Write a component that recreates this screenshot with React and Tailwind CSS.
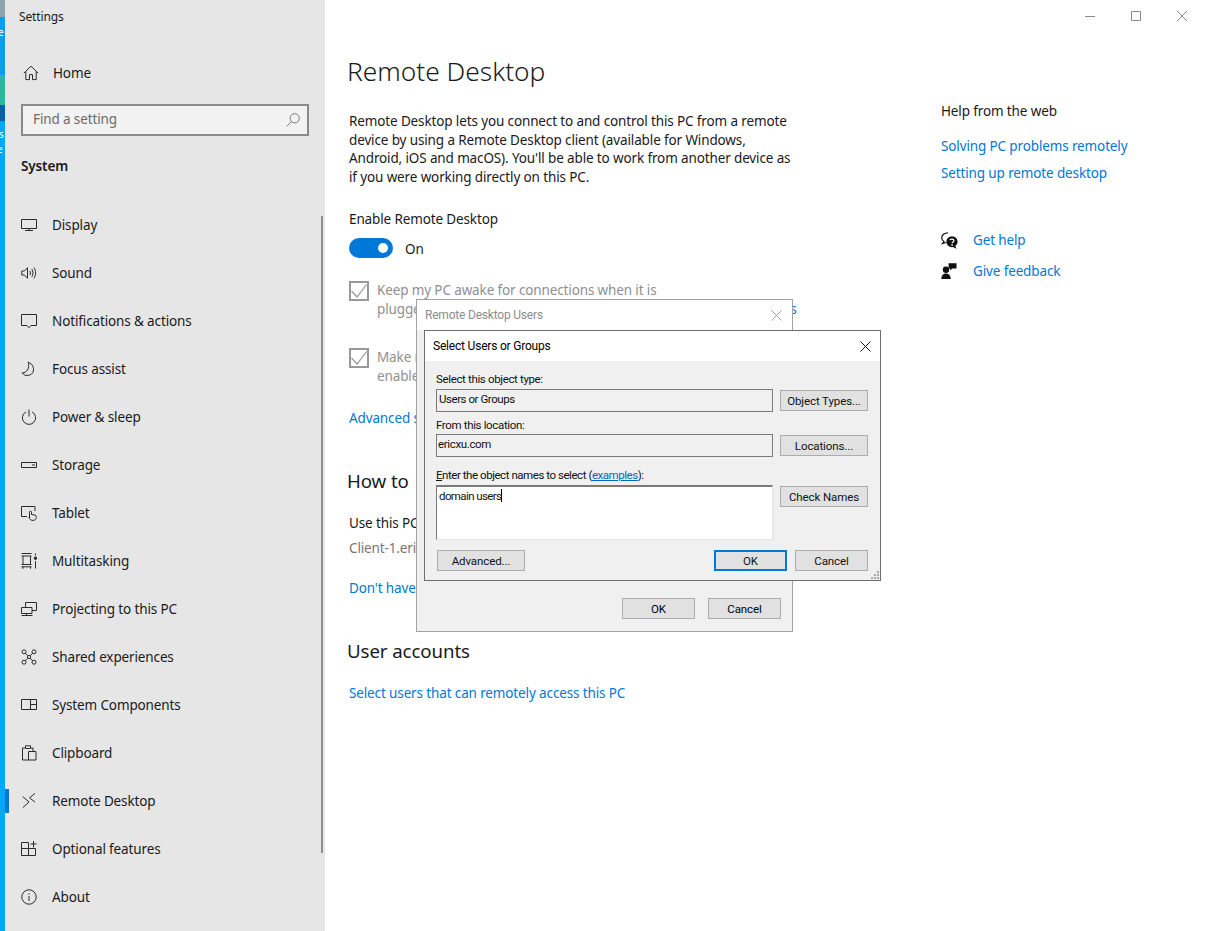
import React from "react";

const S = ({ children, w = 16, h = 16, vb = "0 0 16 16", className = "" }) => (
  <svg width={w} height={h} viewBox={vb} fill="none" stroke="#2b2b2b" strokeWidth="1" className={className}>
    {children}
  </svg>
);

const icons = {
  home: <S><path d="M.8 8.2 8 1.2l7.2 7M2.8 6.6v8h3.7v-5h3v5h3.7v-8" /></S>,
  display: <S><path d="M.5 2.5h15v9H.5zM4 13.5h8M8 11.5v2" /></S>,
  sound: <S><path d="M.8 6h2.4L6.5 2.8v10.4L3.2 10H.8zM8.8 6c.9 1.2.9 2.8 0 4M10.8 4.2c1.6 2.2 1.6 5.4 0 7.6M12.8 2.5c2.4 3.2 2.4 7.8 0 11" /></S>,
  notif: <S><path d="M.5 1.5h15v11H10l-2 2.2-2-2.2H.5z" /></S>,
  focus: <S><path d="M7.2 1.2c2.4 1 5.3 3 5.3 6.6a6.3 6.3 0 0 1-11.5 4c4.5.6 8-4.6 6.2-10.6z" /></S>,
  power: <S><path d="M5 2.9a6.6 6.6 0 1 0 6 0M8 .5v7" /></S>,
  storage: <S><path d="M.5 5.5h15v5H.5zM11 8h3" /></S>,
  tablet: <S><path d="M6 11.5H.5v-10h13.5V6M8.5 13V7.2a1 1 0 0 1 2 0V9.5l3.5.6c.9.2 1.3.7 1.3 1.4v1c0 1.5-1.4 2.9-3.3 2.9-1.8 0-2.7-.6-3.5-1.9l-.7-1.3" /></S>,
  multi: <S><path d="M.5 .5h10M.5 3h10M2 3v8.5M9.5 3v8.5M.5 11.5h10M.5 13.8h10M2 13.8v2M9.5 13.8v2M14.5 .5v2M14.5 8v7.5" /><circle cx="14.5" cy="5.2" r="1.3" fill="#2b2b2b" /></S>,
  project: <S><path d="M4.5 6V1.5h11v8h-4.5M.5 6.5h10.5v6H.5zM.5 14.5h11M5.5 12.5v2" /></S>,
  shared: <S><circle cx="3" cy="2.8" r="2" /><circle cx="13" cy="2.8" r="2" /><circle cx="3" cy="13.2" r="2" /><circle cx="13" cy="13.2" r="2" /><circle cx="8" cy="8" r="1.6" /><path d="m4.4 4.2 2.4 2.6M11.6 4.2 9.2 6.8M4.4 11.8l2.4-2.6M11.6 11.8 9.2 9.2" /></S>,
  comp: <S><path d="M.5 2.5h15v10H.5zM9.5 2.5v10M9.5 7.5h6" /></S>,
  clip: <S><path d="M7.5 15H1.5V3H4.5V.8h5V3h2.5v3.5M4.5 3.5h5M7.5 6.5h7.5V15H7.5z" /></S>,
  remote: <S><path d="m1.8 3.7 6.2 5.2-6.2 5.8M14 .3 8.6 4.8l5.4 4.4" /></S>,
  optional: <S><path d="M.5 1.5h7v13H.5zM.5 7.5h14v7H7.5M14.5 7.5v1M12.5 0v6.5M9.5 3h6" /></S>,
  about: <S><circle cx="8" cy="8" r="7.2" /><path d="M8 7v5M8 4.2v1.3" /></S>,
};

const nav = [
  ["display", "Display"],
  ["sound", "Sound"],
  ["notif", "Notifications & actions"],
  ["focus", "Focus assist"],
  ["power", "Power & sleep"],
  ["storage", "Storage"],
  ["tablet", "Tablet"],
  ["multi", "Multitasking"],
  ["project", "Projecting to this PC"],
  ["shared", "Shared experiences"],
  ["comp", "System Components"],
  ["clip", "Clipboard"],
  ["remote", "Remote Desktop"],
  ["optional", "Optional features"],
  ["about", "About"],
];

const NavRow = ({ icon, label, active }) => (
  <div className="relative flex h-[48px] items-center pl-[16px]">
    {active && <div className="absolute left-0 top-[12px] h-[24px] w-[4px] bg-[#0078d7]" />}
    <span className="flex w-[31px] shrink-0">{icons[icon]}</span>
    <span>{label}</span>
  </div>
);

const Check = () => (
  <span className="flex h-[20px] w-[20px] shrink-0 items-center justify-center border-2 border-[#999999]">
    <svg width="16" height="16" viewBox="0 0 16 16" fill="none" stroke="#999999" strokeWidth="1.2">
      <path d="M.5 8 6 14 15.5 1.5" />
    </svg>
  </span>
);

const Btn = ({ children, className = "", primary = false }) => (
  <div
    className={`flex h-[21px] items-center justify-center bg-[#e1e1e1] pt-[2px] tracking-[-0.1px] ${
      primary ? "border-2 border-[#0078d7]" : "border border-[#adadad]"
    } ${className}`}
  >
    {children}
  </div>
);

const Field = ({ children }) => (
  <div className="flex h-[23px] w-[337px] items-start border border-[#7a7a7a] bg-[#f0f0f0] pl-[1px] pt-[1px] leading-[17px]">
    {children}
  </div>
);

export default function App() {
  return (
    <div className="relative flex h-[931px] w-[1205px] overflow-hidden bg-white font-['Noto_Sans',sans-serif] text-[13.5px] tracking-[-0.13px] text-[#1a1a1a]">
      {/* desktop strip */}
      <div className="relative flex w-[5px] shrink-0 flex-col overflow-hidden">
        <div className="h-[17px] bg-[#8fa3b0]" />
        <div className="h-[58px] bg-[#0a9fe8]" />
        <div className="h-[30px] bg-[#2bb89c]" />
        <div className="h-[16px] bg-[#0b5ea6]" />
        <div className="flex-1 bg-[#00a8f7]" />
        <span className="absolute left-[-2px] top-[26px] text-[10px] leading-[12px] text-white">e</span>
        <span className="absolute left-[-1px] top-[128px] text-[10px] leading-[12px] text-white">s</span>
        <span className="absolute left-[-3px] top-[143px] text-[10px] leading-[12px] text-white">e</span>
      </div>

      {/* sidebar */}
      <aside className="relative w-[320px] shrink-0 bg-[#e6e6e6]">
        <div className="flex h-[34px] items-center pl-[14px] text-[12px]">Settings</div>
        <div className="mt-[15px] flex h-[48px] items-center pl-[18px]">
          <span className="flex w-[30px]">{icons.home}</span>
          <span>Home</span>
        </div>
        <div className="ml-[16px] mt-[7px] flex h-[32px] w-[288px] items-center justify-between border-2 border-[#8a8a8a] bg-[#f2f2f2] pl-[10px] pr-[7px] text-[#6b6b6b]">
          <span className="pb-[2px]">Find a setting</span>
          <svg width="14" height="14" viewBox="0 0 14 14" fill="none" stroke="#7a7a7a" strokeWidth="1">
            <circle cx="8.7" cy="5.3" r="4.6" />
            <path d="M5.4 8.6.6 13.4" />
          </svg>
        </div>
        <div className="ml-[16px] mt-[18px] flex h-[24px] items-center font-semibold">System</div>
        <nav className="mt-[23px]">
          {nav.map(([icon, label]) => (
            <NavRow key={label} icon={icon} label={label} active={label === "Remote Desktop"} />
          ))}
        </nav>
        <div className="absolute left-[316px] top-[216px] h-[637px] w-[2px] bg-[#8f8f8f]" />
      </aside>

      {/* main */}
      <main className="w-[616px] shrink-0 pl-[24px]">
        <h1 className="ml-[-2px] mt-[51px] h-[40px] text-[26.3px] font-light leading-[40px] tracking-normal">Remote Desktop</h1>
        <p className="mt-[21px] whitespace-nowrap leading-[18.6px]">
          Remote Desktop lets you connect to and control this PC from a remote
          <br />
          device by using a Remote Desktop client (available for Windows,
          <br />
          Android, iOS and macOS). You'll be able to work from another device as
          <br />
          if you were working directly on this PC.
        </p>
        <div className="mt-[23px] h-[20px] leading-[20px]">Enable Remote Desktop</div>
        <div className="mt-[9px] flex h-[20px] items-center">
          <span className="flex h-[20px] w-[44px] items-center justify-end rounded-full bg-[#0078d7] pr-[5px]">
            <span className="h-[10px] w-[10px] rounded-full bg-white" />
          </span>
          <span className="ml-[12px] pt-[2px]">On</span>
        </div>
        <div className="mt-[23px] flex gap-[8px] text-[#8f8f8f]">
          <Check />
          <div className="whitespace-nowrap leading-[19px]">
            Keep my PC awake for connections when it is
            <br />
            plugged in <span className="ml-[263px] text-[#0078d7]">Show settings</span>
          </div>
        </div>
        <div className="mt-[29px] flex gap-[8px] text-[#8f8f8f]">
          <Check />
          <div className="whitespace-nowrap leading-[19px]">
            Make my PC discoverable on private networks to
            <br />
            enable automatic connection from a remote device
          </div>
        </div>
        <div className="mt-[22px] h-[20px] leading-[20px] text-[#0078d7]">Advanced settings</div>
        <h2 className="ml-[-2px] mt-[39px] h-[28px] text-[18.7px] leading-[28px] tracking-[-0.1px]">
          How to <span className="ml-[4px]">connect to this PC</span>
        </h2>
        <div className="mt-[18px] h-[20px] leading-[20px]">Use this PC name to connect from your remote device:</div>
        <div className="mt-[5px] h-[20px] leading-[20px] text-[#767676]">Client-1.ericxu.com</div>
        <div className="mt-[20px] h-[20px] leading-[20px] text-[#0078d7]">Don't have a Remote Desktop client on your remote device?</div>
        <h2 className="ml-[-2px] mt-[39px] h-[28px] text-[18.7px] leading-[28px] tracking-[-0.1px]">User accounts</h2>
        <div className="mt-[18px] h-[20px] leading-[20px] text-[#0078d7]">Select users that can remotely access this PC</div>
      </main>

      {/* right column */}
      <section className="flex-1">
        <div className="flex h-[32px] justify-end">
          <span className="flex w-[46px] items-center justify-center">
            <svg width="10" height="10" viewBox="0 0 10 10" stroke="#8a8a8a"><path d="M0 5.5h10" /></svg>
          </span>
          <span className="flex w-[46px] items-center justify-center">
            <svg width="10" height="10" viewBox="0 0 10 10" fill="none" stroke="#8a8a8a"><path d="M.5.5h9v9h-9z" /></svg>
          </span>
          <span className="flex w-[46px] items-center justify-center">
            <svg width="10" height="10" viewBox="0 0 10 10" fill="none" stroke="#8a8a8a"><path d="m0 0 10 10M10 0 0 10" /></svg>
          </span>
        </div>
        <div className="mt-[69px] h-[20px] leading-[20px]">Help from the web</div>
        <div className="mt-[15px] h-[20px] leading-[20px] text-[#0078d7]">Solving PC problems remotely</div>
        <div className="mt-[7px] h-[20px] leading-[20px] text-[#0078d7]">Setting up remote desktop</div>
        <div className="mt-[47px] flex h-[20px] items-center text-[#0078d7]">
          <span className="flex w-[32px]">
            <svg width="17" height="17" viewBox="0 0 17 17">
              <path d="M7 .8C3.4.8.7 3 .7 5.8c0 1.6.9 3 2.3 3.9L1.5 11.5l3.8-1" fill="none" stroke="#111" strokeWidth="1.2" />
              <path d="M11 4.2a5.6 5.6 0 0 0-5.6 5.6c0 3 2.5 5.4 5.6 5.4l.9-.1 3.6 1.6-1.2-2.8c1.4-1 2.3-2.4 2.3-4.1A5.6 5.6 0 0 0 11 4.2z" fill="#111" />
              <path d="M9 8.2c.3-1.6 3.8-1.6 3.9.3.1 1.4-1.7 1.4-1.8 2.8" fill="none" stroke="#fff" strokeWidth="1.3" />
              <path d="M10.4 12.2h1.4v1.5h-1.4z" fill="#fff" />
            </svg>
          </span>
          <span>Get help</span>
        </div>
        <div className="mt-[11px] flex h-[20px] items-center text-[#0078d7]">
          <span className="flex w-[32px]">
            <svg width="16" height="16" viewBox="0 0 16 16" fill="#111">
              <circle cx="5" cy="6.8" r="3.2" />
              <path d="M.3 16c0-3.3 2-5.4 4.7-5.4s4.7 2.1 4.7 5.4z" />
              <path d="M7.6.3h7.9v5.2h-4.2L9.2 7.6V5.5H7.6z" />
            </svg>
          </span>
          <span>Give feedback</span>
        </div>
      </section>

      {/* Remote Desktop Users dialog */}
      <div className="absolute left-[416px] top-[299px] flex h-[333px] w-[377px] flex-col border border-[#a3a3a3] bg-[#f0f0f0] font-['Roboto',sans-serif] text-[11.5px] tracking-normal text-black">
        <div className="flex h-[30px] items-center justify-between bg-white pl-[8px] pr-[10px] text-[12px] tracking-[-0.2px] text-[#8c8c8c]">
          <span>Remote Desktop Users</span>
          <svg width="11" height="11" viewBox="0 0 11 11" stroke="#a0a0a0"><path d="m.5.5 10 10M10.5.5l-10 10" /></svg>
        </div>
        <div className="mt-auto mb-[12px] flex justify-end gap-[13px] pr-[11px]">
          <Btn className="w-[73px]">OK</Btn>
          <Btn className="w-[73px]">Cancel</Btn>
        </div>
      </div>

      {/* Select Users or Groups dialog */}
      <div className="absolute left-[424px] top-[330px] flex h-[251px] w-[457px] flex-col border border-[#6e6e6e] bg-[#f0f0f0] font-['Roboto',sans-serif] text-[11.5px] tracking-[-0.35px] text-[#111]">
        <div className="flex h-[30px] shrink-0 items-center justify-between bg-white pl-[8px] pr-[9px] text-[12px] tracking-[-0.2px] text-black">
          <span>Select Users or Groups</span>
          <svg width="11" height="11" viewBox="0 0 11 11" stroke="#111"><path d="m.5.5 10 10M10.5.5l-10 10" /></svg>
        </div>
        <div className="relative flex flex-1 flex-col pl-[11px] pr-[12px]">
          <div className="mt-[10px] h-[16px] leading-[16px]">Select this object type:</div>
          <div className="mt-[2px] flex justify-between">
            <Field><span className="ml-[1px] tracking-[-0.45px]">Users or Groups</span></Field>
            <Btn className="mt-[1px] w-[88px]">Object Types...</Btn>
          </div>
          <div className="mt-[5px] h-[16px] leading-[16px]">From this location:</div>
          <div className="mt-[1px] flex justify-between">
            <Field>ericxu.com</Field>
            <Btn className="mt-[1px] w-[88px]">Locations...</Btn>
          </div>
          <div className="mt-[10px] h-[16px] leading-[16px] tracking-[-0.45px]">
            <span className="underline">E</span>nter the object names to select (<span className="text-[#0066cc] underline">examples</span>):
          </div>
          <div className="mt-[2px] flex justify-between">
            <div className="h-[55px] w-[337px] border border-[#e3e3e3] border-l-[#7a7a7a] border-t-2 border-t-[#7a7a7a] bg-white pl-[2px] leading-[14px] tracking-[-0.6px]">
              domain users<span className="inline-block h-[13px] w-px translate-y-[2px] bg-black" />
            </div>
            <Btn className="mt-[1px] w-[88px]">Check Names</Btn>
          </div>
          <div className="mt-[10px] flex">
            <Btn className="ml-[1px] w-[88px]">Advanced...</Btn>
            <Btn primary className="ml-auto w-[73px]">OK</Btn>
            <Btn className="ml-[8px] w-[73px]">Cancel</Btn>
          </div>
          <svg className="absolute bottom-[1px] right-[1px]" width="8" height="8" viewBox="0 0 8 8" fill="#a8a8a8">
            <path d="M6 0h2v2H6zM3 3h2v2H3zM6 3h2v2H6zM0 6h2v2H0zM3 6h2v2H3zM6 6h2v2H6z" />
          </svg>
        </div>
      </div>
    </div>
  );
}
